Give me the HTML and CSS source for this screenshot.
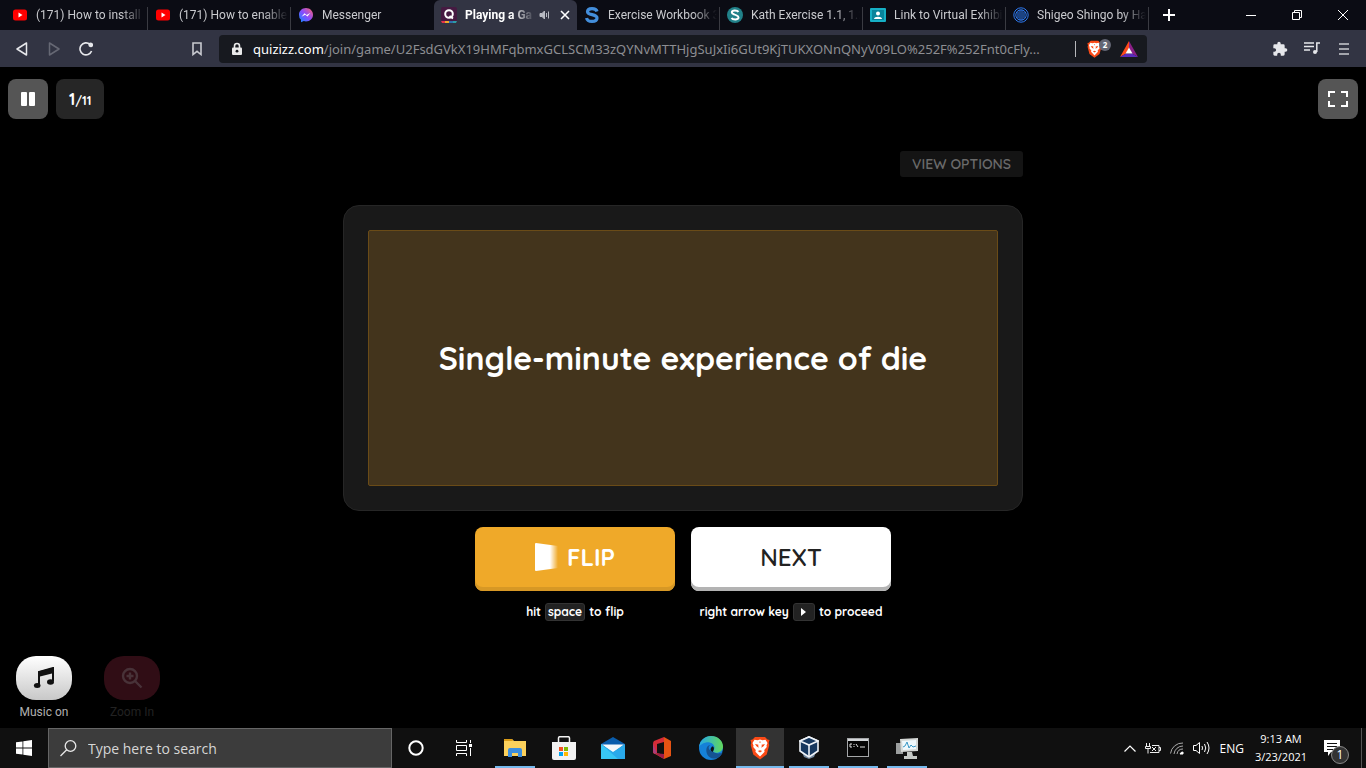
FILE: index.html
```html
<!DOCTYPE html>
<html lang="en">
<head>
<meta charset="utf-8">
<meta name="viewport" content="width=device-width, initial-scale=1">
<title>Playing a Game</title>
<link rel="stylesheet" href="styles.css">
</head>
<body>
<svg class="defs" width="0" height="0" aria-hidden="true">
  <defs>
    <symbol id="youtube" viewBox="0 0 16 16"><rect x="1" y="2.500" width="14" height="11" rx="2.500" fill="#f00"/><path d="M6.500 5.500v5l4-2.500z" fill="#fff"/></symbol>
    <symbol id="lion" viewBox="0 0 20 24">
      <path d="M5 1h10l2.500 2.500L19.500 4l-.8 3 .6 2-2.600 9.500L10 23.500 3.300 18.500.7 9l.6-2L.5 4l2-.5z" fill="#fb4a16"/>
      <path d="M10 3.500l2.500.8 3-.5L17.500 7l-1 2.500.3 1.500-2.600 3 .4 1.800-1.600 1.600L10 20.500l-3-3.100-1.600-1.600.4-1.800-2.600-3 .3-1.500-1-2.500 2-3.200 3 .5z" fill="#fff"/>
      <path d="M5 8l3.500.8-.3 1 .5 2-2.200-1.600zM15 8l-3.500.8.3 1-.5 2 2.200-1.600zM7.800 15l2.200-.8 2.200.8-2.200 1.500zM9.400 5.500h1.200l-.3 1.500h-.6z" fill="#fb4a16"/>
    </symbol>
  </defs>
</svg>

<nav class="tabs" aria-label="Tabs">
  <button class="tab"><svg class="fav" aria-hidden="true"><use href="#youtube"/></svg><span class="tab-title">(171) How to install</span></button>
  <button class="tab"><svg class="fav" aria-hidden="true"><use href="#youtube"/></svg><span class="tab-title">(171) How to enable</span></button>
  <button class="tab tab-before"><svg class="fav" viewBox="0 0 16 16" aria-hidden="true"><defs><linearGradient id="msg" x1="0" y1="1" x2="1" y2="0"><stop offset="0" stop-color="#0a8cff"/><stop offset=".5" stop-color="#8a4bff"/><stop offset="1" stop-color="#ff6268"/></linearGradient></defs><path d="M8 1c4 0 7 2.900 7 6.700s-3 6.700-7 6.700c-.8 0-1.500-.1-2.200-.3L3 15.300v-2.500A6.500 6.500 0 0 1 1 7.700C1 3.900 4 1 8 1z" fill="url(#msg)"/><path d="M3.500 9.800l3-3.600 2.200 1.900 3.800-2.300-3 3.800-2.300-1.900z" fill="#fff"/></svg><span class="tab-title">Messenger</span></button>
  <div class="tab tab-active">
    <svg class="fav" viewBox="0 0 16 16" aria-hidden="true"><rect width="16" height="16" rx="2" fill="#461a42"/><circle cx="8" cy="7" r="3.800" fill="none" stroke="#fff" stroke-width="2"/><path d="M8.500 9l3.500 2.500" stroke="#fff" stroke-width="2"/><path d="M0 14h4v2H1z" fill="#e2334b"/><path d="M4 14h4v2H4z" fill="#efa929"/><path d="M8 14h4v2H8z" fill="#2d70ae"/><path d="M12 14h4l-1 2h-3z" fill="#2d9da6"/></svg>
    <span class="tab-title">Playing a Ga</span>
    <button class="tab-button" aria-label="Mute tab"><svg width="12" height="12" viewBox="0 0 12 12" fill="none" stroke="#b7b9c2"><path d="M1 4.500h2L5.500 2v8L3 7.500H1z" fill="#b7b9c2"/><path d="M7.500 4v4M9.500 2.500v7"/></svg></button>
    <button class="tab-button" aria-label="Close tab"><svg width="10" height="10" viewBox="0 0 10 10" stroke="#fff" stroke-width="1.600"><path d="M1 1l8 8M9 1L1 9"/></svg></button>
  </div>
  <button class="tab"><svg class="fav" viewBox="0 0 16 16" fill="none" stroke="#438edb" stroke-width="3.200" aria-hidden="true"><path d="M13 4.500C12.500 2.500 11 1.600 8 1.600S3.500 2.900 3.500 4.700C3.500 8.500 13 6.700 13 11c0 2.200-2 3.400-5 3.400s-5-1.200-5.400-3.500"/></svg><span class="tab-title">Exercise Workbook 3</span></button>
  <button class="tab"><svg class="fav" viewBox="0 0 16 16" aria-hidden="true"><circle cx="8" cy="8" r="8" fill="#218189"/><path d="M11.500 4.800C10.500 3.400 5 2.800 4.800 5.300c0 2.500 3.500 1.500 3.500 3.300M4.500 11c1 1.600 7 2.300 7-.6C11.500 8 7.800 8.800 7.700 7" fill="none" stroke="#fff" stroke-width="2"/></svg><span class="tab-title">Kath Exercise 1.1, 1.2</span></button>
  <button class="tab"><svg class="fav" viewBox="0 0 16 16" aria-hidden="true"><rect y="1" width="16" height="14" rx="1" fill="#16afc4"/><rect x="2" y="3" width="12" height="10" fill="#08849b"/><circle cx="8" cy="6.500" r="2" fill="#fff"/><path d="M4 12c0-3 8-3 8 0z" fill="#fff"/></svg><span class="tab-title">Link to Virtual Exhibi</span></button>
  <button class="tab"><svg class="fav" viewBox="0 0 16 16" fill="none" stroke="#2f7af0" aria-hidden="true"><circle cx="8" cy="8" r="7.200"/><circle cx="8" cy="8" r="5.200"/><path d="M5 4.500v7M7 3v10M9 3v10M11 4.500v7"/></svg><span class="tab-title">Shigeo Shingo by Ha</span></button>
  <button class="new-tab" aria-label="New tab"><svg width="12" height="12" viewBox="0 0 12 12" stroke="#fff" stroke-width="2"><path d="M6 0v12M0 6h12"/></svg></button>
  <div class="window-buttons">
    <button aria-label="Minimize"><svg width="10" height="10" viewBox="0 0 10 10" stroke="#fff"><path d="M0 5.500h10"/></svg></button>
    <button aria-label="Restore"><svg width="10" height="10" viewBox="0 0 10 10" fill="none" stroke="#fff"><path d="M.5 2.500h7v7h-7zM2.500 2.500v-2h7v7h-2"/></svg></button>
    <button aria-label="Close"><svg width="10" height="10" viewBox="0 0 10 10" stroke="#fff"><path d="M0 0l10 10M10 0L0 10"/></svg></button>
  </div>
</nav>

<div class="toolbar">
  <button class="tool" aria-label="Back"><svg width="12" height="14" viewBox="0 0 12 14" fill="none" stroke="#e6e7eb" stroke-width="1.500" stroke-linejoin="round"><path d="M10.500 1v12L1 7z"/></svg></button>
  <button class="tool" aria-label="Forward" disabled><svg width="12" height="14" viewBox="0 0 12 14" fill="none" stroke="#666874" stroke-width="1.500" stroke-linejoin="round"><path d="M1.500 1v12L11 7z"/></svg></button>
  <button class="tool" aria-label="Reload"><svg width="14" height="14" viewBox="0 0 14 14" fill="none" stroke="#e6e7eb" stroke-width="1.600"><path d="M11 2.400A6 6 0 1 0 12.600 9"/><circle cx="11.700" cy="2.800" r="1.600" fill="#e6e7eb"/></svg></button>
  <button class="tool bookmark" aria-label="Bookmark this page"><svg width="10" height="14" viewBox="0 0 10 14" fill="none" stroke="#c9cad0" stroke-width="1.600"><path d="M1 1h8v11.500L5 9.300l-4 3.200z"/></svg></button>
  <div class="address">
    <svg width="10" height="14" viewBox="0 0 10 14" aria-hidden="true"><path d="M2.500 6V4a2.500 2.500 0 0 1 5 0v2" fill="none" stroke="#e9e9ea" stroke-width="1.600"/><rect y="5.500" width="10" height="7.500" rx="1" fill="#e9e9ea"/><circle cx="5" cy="9.200" r="1.400" fill="#17191f"/></svg>
    <label class="domain" for="url">quizizz.com</label>
    <input class="url" id="url" value="/join/game/U2FsdGVkX19HMFqbmxGCLSCM33zQYNvMTTHjgSuJxIi6GUt9KjTUKXONnQNyV09LO%252F%252Fnt0cFly...">
    <span class="divider"></span>
    <button class="shield" aria-label="Brave Shields"><svg width="15" height="18"><use href="#lion"/></svg><span class="shield-count">2</span></button>
    <button class="rewards" aria-label="Brave Rewards"><svg width="18" height="16" viewBox="0 0 18 16"><path d="M9 0L0 16l6-3.500 3-5.500z" fill="#ff4a1a"/><path d="M9 0l9 16-6-3.500L9 7z" fill="#8b1f87"/><path d="M0 16h18l-6-3.500H6z" fill="#5a2bbb"/><path d="M9 6.500l3.500 6h-7z" fill="#fff"/></svg></button>
  </div>
  <button class="tool" aria-label="Extensions"><svg width="16" height="16" viewBox="0 0 24 24" fill="#e6e7eb"><path d="M20.500 11H19V7a2 2 0 0 0-2-2h-4V3.500a2.500 2.500 0 0 0-5 0V5H4a2 2 0 0 0-2 2v3.800h1.500a2.700 2.700 0 0 1 0 5.400H2V20c0 1.100.9 2 2 2h3.800v-1.500a2.700 2.700 0 0 1 5.400 0V22H17a2 2 0 0 0 2-2v-4h1.500a2.500 2.500 0 0 0 0-5z"/></svg></button>
  <button class="tool" aria-label="Media controls"><svg width="16" height="13" viewBox="0 0 16 13" fill="none" stroke="#e6e7eb" stroke-width="1.500"><path d="M0 1h10M0 4.500h10M0 8h6M16 1h-3.200v9"/><circle cx="11" cy="10" r="2" fill="#e6e7eb" stroke="none"/></svg></button>
  <button class="tool" aria-label="Menu"><svg width="10" height="12" viewBox="0 0 10 12" stroke="#c9cad0" stroke-width="1.600"><path d="M0 1h10M0 6h10M0 11h10"/></svg></button>
</div>

<main class="game">
  <header class="game-top">
    <button class="square" aria-label="Pause"><svg width="16" height="14" viewBox="0 0 16 14" fill="#fff"><rect x="1" width="6" height="14" rx="1"/><rect x="9" width="6" height="14" rx="1"/></svg></button>
    <div class="progress"><span class="current">1</span>/11</div>
    <button class="square fullscreen" aria-label="Full screen"><svg width="20" height="16" viewBox="0 0 20 16" fill="none" stroke="#fff" stroke-width="2"><path d="M1 6V1h6M13 1h6v5M19 10v5h-6M7 15H1v-5"/></svg></button>
  </header>

  <section class="flashcard">
    <button class="view-options">VIEW OPTIONS</button>
    <div class="card"><h1 class="term">Single-minute experience of die</h1></div>
    <div class="actions">
      <div class="action">
        <button class="big flip"><svg width="24" height="28" viewBox="0 0 24 28" aria-hidden="true"><defs><linearGradient id="fade"><stop offset=".65" stop-color="#fff"/><stop offset="1" stop-color="#fff" stop-opacity="0"/></linearGradient></defs><path d="M0 1Q0 0 1 0l22 3v22L1 28q-1 0-1-1z" fill="url(#fade)"/></svg>FLIP</button>
        <p class="hint">hit <kbd>space</kbd> to flip</p>
      </div>
      <div class="action">
        <button class="big next">NEXT</button>
        <p class="hint">right arrow key <kbd class="arrow"><svg width="5" height="8" viewBox="0 0 5 8" fill="#fff" aria-label="right arrow"><path d="M0 0l5 4-5 4z"/></svg></kbd> to proceed</p>
      </div>
    </div>
  </section>

  <footer class="controls">
    <button class="control"><span class="pill pill-music"><svg width="22" height="22" viewBox="0 0 22 22" aria-hidden="true"><path d="M6 18V5l14-4v13" fill="none" stroke="#111" stroke-width="2"/><path d="M5 4.500L21 .5V6L5 10z" fill="#111"/><ellipse cx="4.200" cy="18.500" rx="3.300" ry="2.500" fill="#111"/><ellipse cx="17.500" cy="15" rx="3.500" ry="2.700" fill="#111"/></svg></span>Music on</button>
    <button class="control control-off" disabled><span class="pill pill-zoom"><svg width="22" height="22" viewBox="0 0 22 22" fill="none" stroke="#483238" stroke-width="2.400" aria-hidden="true"><circle cx="9" cy="9" r="7"/><path d="M14 14l6.500 6.500M5.500 9h7M9 5.500v7"/></svg></span>Zoom In</button>
  </footer>
</main>

<div class="taskbar">
  <button class="start" aria-label="Start"><svg width="16" height="16" viewBox="0 0 16 16" fill="#fff"><path d="M0 2.300L6.500 1.400v6.200H0zM7.300 1.300L16 0v7.600H7.300zM0 8.400h6.500v6.200L0 13.700zM7.300 8.400H16V16l-8.700-1.300z"/></svg></button>
  <div class="search">
    <svg width="17" height="17" viewBox="0 0 17 17" fill="none" stroke="#e8e8e8" stroke-width="1.300" aria-hidden="true"><circle cx="10.500" cy="6" r="5.300"/><path d="M6.700 9.800L.5 16"/></svg>
    <input type="search" placeholder="Type here to search" aria-label="Type here to search">
  </div>
  <button class="app" aria-label="Cortana"><svg width="16" height="16" viewBox="0 0 16 16" fill="none" stroke="#fff" stroke-width="2"><circle cx="8" cy="8" r="6.700"/></svg></button>
  <button class="app" aria-label="Task View"><svg width="16" height="16" viewBox="0 0 16 16" fill="none" stroke="#fff"><path d="M.5 0v2.500h10V0M.5 5.500h10v5H.5zM.5 16v-2.500h10V16M14.500 0v3M14.500 8v8"/><path d="M13 4h3v3h-3z" fill="#fff" stroke="none"/></svg></button>
  <div class="apps">
    <button class="app open" aria-label="File Explorer"><svg width="22" height="20" viewBox="0 0 22 20"><path d="M0 2q0-1 1-1h7l2 2h12v15H0z" fill="#fbd15c"/><path d="M0 1h8l1 2H0z" fill="#d99b17"/><path d="M4 19v-7q0-2 2-2h10q2 0 2 2v7h-4v-4H8v4z" fill="#3c8ede"/></svg></button>
    <button class="app" aria-label="Microsoft Store"><svg width="24" height="24" viewBox="0 0 24 24"><path d="M6.500 6V2q0-1.300 1.300-1.300h8.400q1.300 0 1.300 1.300v4" fill="none" stroke="#f2f2f2" stroke-width="1.500"/><path d="M0 6h24v16q0 2-2 2H2q-2 0-2-2z" fill="#f2f2f2"/><path d="M7 11h4v4H7z" fill="#f25022"/><path d="M12 11h4v4h-4z" fill="#7fba00"/><path d="M7 16h4v4H7z" fill="#00a4ef"/><path d="M12 16h4v4h-4z" fill="#ffb900"/></svg></button>
    <button class="app" aria-label="Mail"><svg width="24" height="22" viewBox="0 0 24 22"><path d="M0 7l12-7 12 7v4H0z" fill="#0a5dac"/><path d="M1 7.500h22L12 16z" fill="#f6f9fb"/><path d="M0 7v15h24V7l-12 8z" fill="#29a9ea"/><path d="M0 7v15h17z" fill="#38c6f4"/></svg></button>
    <button class="app" aria-label="Office"><svg width="20" height="24" viewBox="0 0 20 24"><path d="M12 1L2 5Q1 6 1 8v8q0 3 4 1V8l7-2z" fill="#d52c38"/><path d="M1 16q1 2 4 3l7 4 7-3V5l-7-4v18z" fill="#e65313"/><path d="M2 17l10 1v5z" fill="#9b1b48"/><path d="M1 8l4 9q-4 2-4-2z" fill="#a93d7c"/></svg></button>
    <button class="app" aria-label="Edge"><svg width="24" height="24" viewBox="0 0 24 24"><defs><linearGradient id="edge"><stop stop-color="#25a8e8"/><stop offset="1" stop-color="#62d85b"/></linearGradient></defs><circle cx="12" cy="12" r="12" fill="#1581d8"/><path d="M0 11C1 4 6 0 12 0c7 0 12 5 12 10.500S18 18 14.500 16c-1-1 1-2 1-4.500C15.500 8 11 5.500 7 6.500 3 7.500 1 9 0 11z" fill="url(#edge)"/><path d="M14.500 16c2.500 2 7 1.500 9 .5-1 3.500-5 6.500-9 6-5-.5-8-5-7-10 .5-2 2-3.500 4-3.500C8 11 10 15 14.500 16z" fill="#155392"/><path d="M14 10.500q2 2-.3 5.500-4-2-.7-5.500z" fill="#111"/></svg></button>
    <button class="app open current-app" aria-label="Brave"><svg width="20" height="24"><use href="#lion"/></svg></button>
    <button class="app open" aria-label="VirtualBox"><svg width="20" height="24" viewBox="0 0 20 24" stroke="#eef3f8" stroke-width="1.600"><path d="M3 16l2 5 5 2 5-2 2-5-7 6z" fill="#71879e" stroke="none"/><path d="M10 1l9 4v10l-9 6-9-6V5z" fill="#16385f"/><path d="M1 5l9 4 9-4-9-4z" fill="#16385f"/><path d="M10 9v12"/></svg></button>
    <button class="app open" aria-label="Command Prompt"><svg width="22" height="20" viewBox="0 0 22 20"><rect x=".5" y=".5" width="21" height="18" fill="#050505" stroke="#a5a7a9"/><path d="M1 1h20v2H1z" fill="#d3d6d8"/><path d="M5 6H3v3h2M7 6v1M7 8v1M9 6l2 3M13 9h5" fill="none" stroke="#e2e2e2"/></svg></button>
    <button class="app open" aria-label="Task Manager"><svg width="23" height="22" viewBox="0 0 23 22"><path d="M0 6h7v11H0z" fill="#9c9f9f"/><path d="M4 2l18-1v13l-17 1z" fill="#d5d8d6"/><path d="M6 4l14-1v9L7 13z" fill="#eff8fc"/><path d="M7 10l2-1 2-4 2 6 2-3 2 2 3-1" fill="none" stroke="#3997c5"/><path d="M11 15h5l1 4h4v3H8v-3h3z" fill="#c5c9c6"/></svg></button>
  </div>
  <div class="tray">
    <button aria-label="Show hidden icons"><svg width="12" height="7" viewBox="0 0 12 7" fill="none" stroke="#fff" stroke-width="1.200"><path d="M.5 6.500L6 1l5.500 5.500"/></svg></button>
    <button aria-label="Battery"><svg width="16" height="11" viewBox="0 0 16 11" fill="none" stroke="#eee"><path d="M1.500 0v3M4.500 0v3M.500 3.500h5v2H.5zM3 6v4.500M5 9.500h9v-7H7M14 4.500h1.500v3H14M7 4l4 4M11 4L7 8"/></svg></button>
    <button aria-label="Network"><svg width="14" height="14" viewBox="0 0 14 14" fill="none" stroke="#aaa"><path d="M.5 12.500A12 12 0 0 1 13 2M4 13A9 9 0 0 1 13 5M7 13A6 6 0 0 1 13 8" /><path d="M10 13a3 3 0 0 1 3-2v2z" fill="#fff" stroke="#fff"/></svg></button>
    <button aria-label="Volume"><svg width="17" height="14" viewBox="0 0 17 14" fill="none" stroke="#fff"><path d="M.5 4.500h2.500L6.500 1.500v11L3 9.500H.5zM9 5q1 2 0 4M11.500 3q2.500 4 0 8M14 1q4 6 0 12"/></svg></button>
    <button class="language">ENG</button>
    <button class="clock"><span>9:13 AM</span><span>3/23/2021</span></button>
    <button class="notifications" aria-label="1 new notification"><svg width="16" height="16" viewBox="0 0 16 16"><path d="M0 0h16v12h-9l-3 4v-4H0z" fill="#fff"/><path d="M3 3.500h10M3 6.500h10M3 9.500h6" stroke="#111"/></svg><span class="badge">1</span></button>
    <span class="desktop-edge"></span>
  </div>
</div>
</body>
</html>
```

FILE: styles.css
```css
* { box-sizing: border-box; }

body {
  margin: 0;
  min-height: 100vh;
  display: flex;
  flex-direction: column;
  background: #000;
  color: #fff;
  font-family: "Open Sans", "Noto Sans", sans-serif;
  font-size: 12px;
}

button, input {
  margin: 0;
  padding: 0;
  border: 0;
  background: none;
  color: inherit;
  font: inherit;
}

input { min-width: 0; outline: 0; }
svg { flex: none; display: block; }
.defs { position: absolute; }

/* Tab strip */
.tabs {
  display: flex;
  height: 30px;
  padding-left: 5px;
  background: #0b0c14;
  font-family: Roboto, "Open Sans", sans-serif;
}

.tab {
  flex: 0 1 143px;
  min-width: 0;
  display: flex;
  align-items: center;
  padding: 0 3px 0 7px;
  color: #c9cace;
  text-align: left;
  background: linear-gradient(#3a3b42, #3a3b42) right bottom / 1px 23px no-repeat;
}

.tab-before { background: none; }
.fav { width: 16px; height: 16px; margin-right: 8px; }

.tab-title {
  flex: 1;
  min-width: 0;
  overflow: hidden;
  white-space: nowrap;
  mask-image: linear-gradient(to right, #000 calc(100% - 24px), transparent);
}

.tab-active {
  background: #323443;
  border-radius: 6px 6px 0 0;
  color: #fff;
  font-weight: 700;
  padding-right: 2px;
}

.tab-button { display: grid; place-items: center; width: 20px; height: 20px; }
.new-tab { width: 40px; display: grid; place-items: center; }
.window-buttons { display: flex; margin-left: auto; }
.window-buttons button { width: 46px; display: grid; place-items: center; }

/* Toolbar */
.toolbar {
  display: flex;
  align-items: center;
  height: 37px;
  padding: 0 6px;
  background: #323443;
}

.tool { width: 32px; height: 32px; display: grid; place-items: center; }
.bookmark { margin-left: 79px; }

.address {
  flex: 1;
  min-width: 0;
  display: flex;
  align-items: center;
  height: 28px;
  margin: 0 117px 0 6px;
  padding: 0 9px 0 13px;
  border-radius: 4px;
  background: #17191f;
  font-family: "Noto Sans", "Open Sans", sans-serif;
  font-size: 13px;
}

.domain { margin-left: 11px; }
.url { flex: 1; color: #8d8e92; text-overflow: ellipsis; }
.divider { width: 1px; height: 16px; margin: 0 11px; background: #b6b7ba; }
.shield { position: relative; width: 24px; }

.shield-count {
  position: absolute;
  top: -1px;
  right: 0;
  width: 12px;
  height: 12px;
  border-radius: 6px;
  background: #636674;
  font-size: 8px;
  font-weight: 700;
  line-height: 12px;
  text-align: center;
}

.rewards { margin-left: 9px; }

/* Game */
.game {
  flex: 1;
  display: flex;
  flex-direction: column;
  font-family: Quicksand, Lato, sans-serif;
}

.game-top { display: flex; gap: 8px; padding: 12px 8px; }

.square {
  width: 40px;
  height: 40px;
  display: grid;
  place-items: center;
  border-radius: 8px;
  background: #555;
}

.fullscreen { margin-left: auto; }

.progress {
  height: 40px;
  padding: 0 13px;
  border-radius: 8px;
  background: #262626;
  font-size: 12px;
  font-weight: 700;
  line-height: 40px;
}

.current { font-size: 16px; }

.flashcard {
  width: 100%;
  max-width: 680px;
  margin: 20px auto 0;
  display: flex;
  flex-direction: column;
}

.view-options {
  align-self: flex-end;
  height: 26px;
  padding: 0 12px;
  border-radius: 3px;
  background: #141414;
  color: #6a6a6a;
  font-size: 14px;
  font-weight: 600;
}

.card {
  margin: 28px 0 16px;
  padding: 24px;
  border: 1px solid #262626;
  border-radius: 16px;
  background: #191919;
}

.term {
  display: grid;
  place-items: center;
  min-height: 256px;
  margin: 0;
  border: 1px solid #6a4b17;
  border-radius: 2px;
  background: #43341c;
  font-size: 32px;
  font-weight: 700;
  text-align: center;
}

.actions { display: flex; justify-content: center; gap: 16px; }
.action { width: 200px; }

.big {
  width: 100%;
  height: 64px;
  display: flex;
  align-items: center;
  justify-content: center;
  gap: 8px;
  padding-bottom: 4px;
  border-radius: 8px;
  font-size: 24px;
  font-weight: 700;
}

.flip { background: #efa929; box-shadow: inset 0 -4px #d79825; }
.next { background: #fff; color: #222; box-shadow: inset 0 -4px #b3b3b3; font-weight: 600; }

.hint {
  display: flex;
  align-items: center;
  justify-content: center;
  gap: 4px;
  margin: 12px 0 0;
  font-size: 12px;
  font-weight: 700;
  line-height: 18px;
  white-space: nowrap;
}

kbd {
  padding: 0 2px;
  border: 1px solid #333;
  border-radius: 3px;
  background: #222;
  font: inherit;
  line-height: 16px;
}

.arrow { display: grid; place-items: center; width: 22px; height: 18px; }

.controls { display: flex; gap: 32px; margin-top: auto; padding: 0 16px 8px; }

.control {
  width: 56px;
  font-family: Roboto, sans-serif;
  font-size: 12px;
  line-height: 16px;
  color: #b0b0b0;
  white-space: nowrap;
}

.control-off { color: #222; }

.pill {
  display: grid;
  place-items: center;
  height: 44px;
  margin-bottom: 4px;
  border-radius: 20px;
}

.pill-music { background: linear-gradient(#fff, #c8c8c8); }
.pill-zoom { background: #300d15; }

/* Taskbar */
.taskbar { display: flex; height: 40px; background: #101010; }
.start { width: 48px; display: grid; place-items: center; }

.search {
  flex: 0 1 344px;
  min-width: 0;
  display: flex;
  align-items: center;
  gap: 11px;
  padding: 0 11px;
  border: 1px solid #666;
  background: #3c3c3c;
}

.search input { flex: 1; font-size: 14px; }
.search input::placeholder { color: #d6d6d6; opacity: 1; }

.app { width: 48px; height: 40px; display: grid; place-items: center; }
.apps { display: flex; gap: 1px; margin-left: 3px; }
.open { background: linear-gradient(#76b9ed, #76b9ed) center bottom / 40px 2px no-repeat; }
.current-app { background: linear-gradient(#76b9ed, #76b9ed) bottom / 100% 2px no-repeat #333; }

.tray { display: flex; align-items: center; gap: 9px; margin-left: auto; padding-right: 4px; }
.language { margin-left: 1px; }
.clock { display: flex; flex-direction: column; align-items: center; width: 56px; font-size: 11px; line-height: 18px; }
.notifications { position: relative; margin-left: 6px; }

.badge {
  position: absolute;
  top: 6px;
  left: 7px;
  width: 18px;
  height: 18px;
  border: 1px solid #888;
  border-radius: 9px;
  background: #333;
  font-size: 12px;
  line-height: 16px;
  text-align: center;
}

.desktop-edge { align-self: stretch; width: 1px; margin-left: 12px; background: #555; }
```
